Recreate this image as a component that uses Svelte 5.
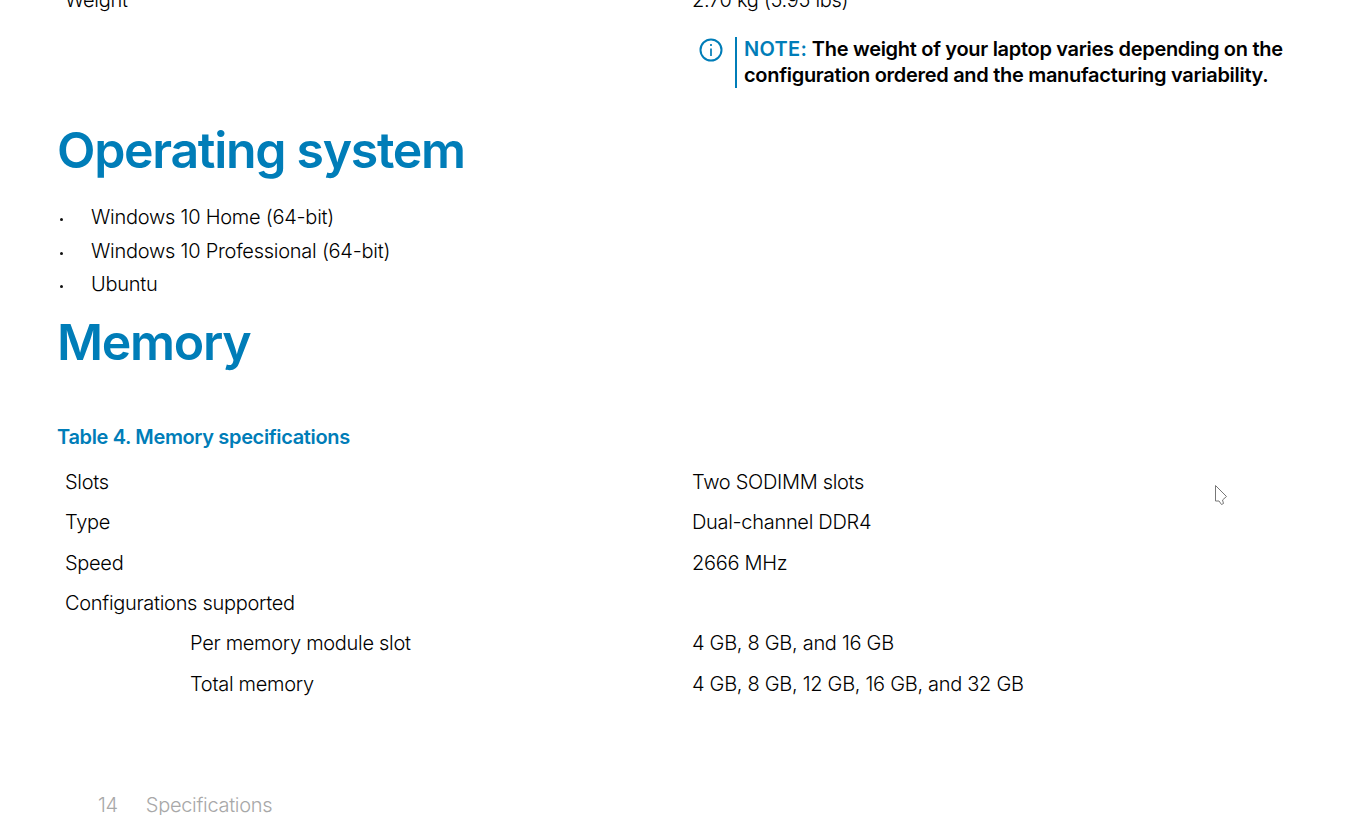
<script>
  const osList = ['Windows 10 Home (64-bit)', 'Windows 10 Professional (64-bit)', 'Ubuntu'];
  const memory = [
    { name: 'Slots', value: 'Two SODIMM slots' },
    { name: 'Type', value: 'Dual-channel DDR4' },
    { name: 'Speed', value: '2666 MHz' },
    { name: 'Configurations supported', value: '' },
    { name: 'Per memory module slot', value: '4 GB, 8 GB, and 16 GB', sub: true },
    { name: 'Total memory', value: '4 GB, 8 GB, 12 GB, 16 GB, and 32 GB', sub: true }
  ];
</script>

<div class="page">
  <div class="row top">
    <div class="cell">Weight</div>
    <div class="cell">2.70 kg (5.95 lbs)</div>
  </div>

  <div class="note">
    <svg class="info" width="24" height="24" viewBox="0 0 24 24" fill="none" stroke="#007db8">
      <circle cx="12" cy="12" r="10.5" stroke-width="2" />
      <path d="M12 10.5V18M12 6V8" stroke-width="1.7" />
    </svg>
    <div class="note-body">
      <p><span class="label">NOTE:</span> The weight of your laptop varies depending on the configuration ordered and the manufacturing variability.</p>
    </div>
  </div>

  <h1 class="os-title">Operating system</h1>
  <ul>
    {#each osList as item}
      <li>{item}</li>
    {/each}
  </ul>

  <h1 class="mem-title">Memory</h1>
  <h2>Table 4. Memory specifications</h2>

  <div class="table">
    {#each memory as row}
      <div class="row">
        <div class="cell" class:sub={row.sub}>{row.name}</div>
        <div class="cell">{row.value}</div>
      </div>
    {/each}
  </div>

  <footer>
    <span class="num">14</span>
    <span>Specifications</span>
  </footer>

  <svg class="cursor" width="14" height="22" viewBox="0 0 14 22" fill="#fff" stroke="#777" stroke-width="1">
    <path d="M1.5 1.5V17H5L7.5 20.5L9.5 19.5L8.5 16L12.5 12.5Z" />
  </svg>
</div>

<style>
  :global(body) {
    background: #fff;
    overflow: hidden;
  }

  .page {
    position: relative;
    height: 815px;
    overflow: hidden;
    padding: 0 0 0 57px;
    box-sizing: border-box;
    font-family: Inter, 'Liberation Sans', sans-serif;
    font-size: 20px;
    font-weight: 300;
    letter-spacing: -0.3px;
    color: #000;
  }

  .row {
    display: grid;
    grid-template-columns: 627px 1fr;
    height: 40.3px;
    align-items: center;
  }

  .top {
    margin-top: -20px;
    height: 40px;
  }

  .cell {
    padding-left: 8px;
    white-space: nowrap;
  }

  .sub {
    padding-left: 133px;
  }

  .note {
    display: flex;
    margin: 17px 0 0 642px;
    height: 52px;
  }

  .info {
    flex: none;
    margin-top: 1px;
  }

  .note-body {
    margin-left: 12px;
    padding-left: 7px;
    height: 51px;
    border-left: 2.5px solid #007db8;
  }

  .note p {
    margin: -1px 0 0;
    width: 590px;
    font-weight: 600;
    line-height: 26px;
    letter-spacing: -0.3px;
  }

  .label {
    color: #007db8;
    letter-spacing: 0.3px;
  }

  h1 {
    margin: 0;
    color: #007db8;
    font-size: 50px;
    font-weight: 600;
    line-height: 62px;
    letter-spacing: -1.3px;
  }

  .os-title {
    margin-top: 30px;
  }

  ul {
    list-style: none;
    margin: 20px 0 0;
    padding: 0;
  }

  li {
    position: relative;
    height: 33.5px;
    line-height: 33.5px;
    padding-left: 34px;
    letter-spacing: -0.25px;
  }

  li::before {
    content: '';
    position: absolute;
    left: 3px;
    top: 17px;
    width: 3px;
    height: 3px;
    border-radius: 50%;
    background: #111;
  }

  .mem-title {
    margin-top: 9px;
  }

  h2 {
    margin: 49px 0 0;
    color: #007db8;
    font-size: 20px;
    font-weight: 600;
    line-height: 30px;
    letter-spacing: -0.35px;
  }

  .table {
    margin-top: 10.4px;
  }

  footer {
    position: absolute;
    left: 98px;
    top: 795px;
    display: flex;
    gap: 28px;
    line-height: 20px;
    color: #a8a8a8;
  }

  .cursor {
    position: absolute;
    left: 1214px;
    top: 484px;
  }
</style>
